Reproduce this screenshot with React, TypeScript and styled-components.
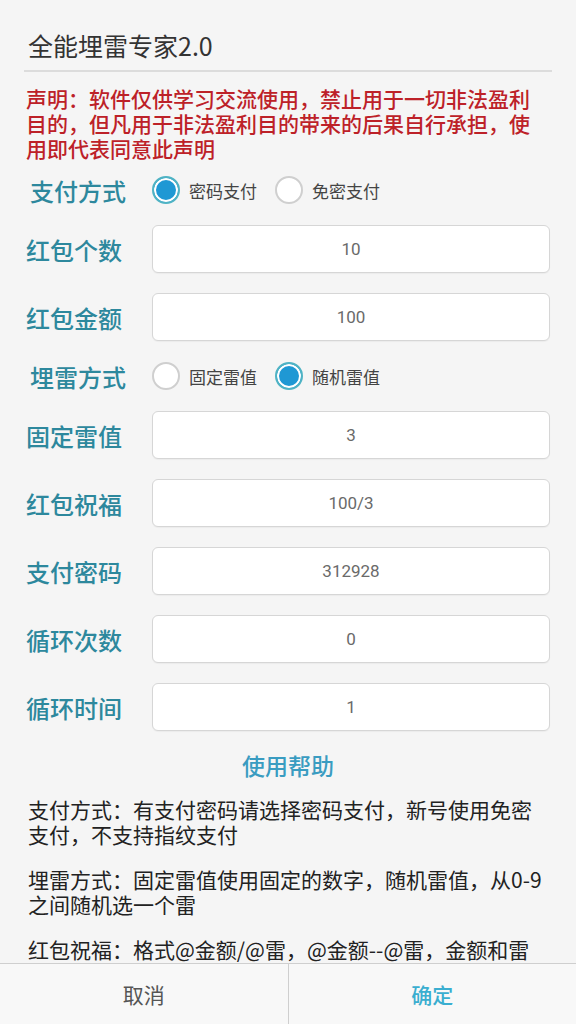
import styled, {createGlobalStyle} from "styled-components";

const GlobalStyle = createGlobalStyle`
  html, body {
    margin: 0;
    padding: 0;
    background: #f5f5f5;
    font-family: "Noto Sans CJK SC", "Noto Sans", sans-serif;
  }
  * {
    box-sizing: border-box;
  }
`;

const Page = styled.div`
  width: 576px;
  height: 1024px;
  overflow: hidden;
`;

const Header = styled.header`
  height: 72px;
  margin: 0 24px;
  padding: 0 4px 12px;
  border-bottom: 2px solid #dcdcdc;
  display: flex;
  align-items: flex-end;
`;

const Title = styled.h1`
  margin: 0;
  font-size: 25px;
  font-weight: 400;
  color: #333;
  line-height: 1;
`;

const Notice = styled.p`
  margin: 14px 0 0 26px;
  width: 520px;
  font-size: 21px;
  line-height: 25px;
  font-weight: 500;
  color: #bd2128;
`;

const Form = styled.div`
  margin-top: 14px;
  display: flex;
  flex-direction: column;
  gap: 20px;
`;

const Row = styled.div<{ $short?: boolean }>`
  display: flex;
  align-items: center;
  height: ${props => props.$short ? "30px" : "48px"};
  padding-left: 26px;
`;

const Label = styled.span<{ $indent?: boolean }>`
  width: 126px;
  padding-left: ${props => props.$indent ? "4px" : "0"};
  font-size: 24px;
  font-weight: 500;
  color: #2d889d;
  flex-shrink: 0;
`;

const Field = styled.div`
  width: 398px;
  height: 48px;
  background: #fff;
  border: 1px solid #d6d6d6;
  border-radius: 6px;
  box-shadow: 0 1px 1px rgba(0, 0, 0, 0.04);
  display: flex;
  align-items: center;
  justify-content: center;
  font-family: Roboto, "Noto Sans", sans-serif;
  font-size: 17px;
  color: #6a6a6a;
`;

const RadioGroup = styled.div`
  display: flex;
  align-items: center;
  gap: 18px;
`;

const Option = styled.label`
  display: flex;
  align-items: center;
  gap: 9px;
  font-size: 17px;
  color: #444;
`;

const Circle = styled.span<{ $checked?: boolean }>`
  width: 28px;
  height: 28px;
  border-radius: 50%;
  border: 2px solid ${props => props.$checked ? "#4fb3c4" : "#cfcfcf"};
  background: ${props => props.$checked ? "#1f98d4" : "#fff"};
  box-shadow: ${props => props.$checked ? "inset 0 0 0 2px #fff" : "none"};
`;

const HelpLink = styled.div`
  margin: 18px 0 16px;
  text-align: center;
  font-size: 23px;
  font-weight: 500;
  color: #3a9cc1;
  line-height: 32px;
`;

const HelpText = styled.p`
  margin: 0 0 20px 28px;
  width: 520px;
  font-size: 21px;
  line-height: 25px;
  color: #222;
`;

const BottomBar = styled.footer`
  position: fixed;
  left: 0;
  right: 0;
  bottom: 0;
  height: 61px;
  display: flex;
  background: #f8f8f8;
  border-top: 1px solid #cfcfcf;
`;

const BarButton = styled.button<{ $primary?: boolean }>`
  flex: 1;
  border: none;
  background: transparent;
  font-family: "Noto Sans CJK SC", sans-serif;
  font-size: 21px;
  font-weight: ${props => props.$primary ? 500 : 400};
  color: ${props => props.$primary ? "#3aaed0" : "#555"};
  & + & {
    border-left: 1px solid #cfcfcf;
  }
`;

const fields = [
    {label: "固定雷值", value: "3"},
    {label: "红包祝福", value: "100/3"},
    {label: "支付密码", value: "312928"},
    {label: "循环次数", value: "0"},
    {label: "循环时间", value: "1"},
];

function Radio({checked, text}: { checked?: boolean, text: string }) {
    return (
        <Option>
            <Circle $checked={checked}/>
            {text}
        </Option>
    );
}

function App() {
    return (
        <Page>
            <GlobalStyle/>
            <Header>
                <Title>全能埋雷专家2.0</Title>
            </Header>
            <Notice>声明：软件仅供学习交流使用，禁止用于一切非法盈利目的，但凡用于非法盈利目的带来的后果自行承担，使用即代表同意此声明</Notice>
            <Form>
                <Row $short>
                    <Label $indent>支付方式</Label>
                    <RadioGroup>
                        <Radio checked text="密码支付"/>
                        <Radio text="免密支付"/>
                    </RadioGroup>
                </Row>
                <Row>
                    <Label>红包个数</Label>
                    <Field>10</Field>
                </Row>
                <Row>
                    <Label>红包金额</Label>
                    <Field>100</Field>
                </Row>
                <Row $short>
                    <Label $indent>埋雷方式</Label>
                    <RadioGroup>
                        <Radio text="固定雷值"/>
                        <Radio checked text="随机雷值"/>
                    </RadioGroup>
                </Row>
                {fields.map(f => (
                    <Row key={f.label}>
                        <Label>{f.label}</Label>
                        <Field>{f.value}</Field>
                    </Row>
                ))}
            </Form>
            <HelpLink>使用帮助</HelpLink>
            <HelpText>支付方式：有支付密码请选择密码支付，新号使用免密支付，不支持指纹支付</HelpText>
            <HelpText>埋雷方式：固定雷值使用固定的数字，随机雷值，从0-9之间随机选一个雷</HelpText>
            <HelpText>红包祝福：格式@金额/@雷，@金额--@雷，金额和雷前面必须加@符号，否则软件无法识别雷值和金额</HelpText>
            <BottomBar>
                <BarButton>取消</BarButton>
                <BarButton $primary>确定</BarButton>
            </BottomBar>
        </Page>
    );
}

export default App;
